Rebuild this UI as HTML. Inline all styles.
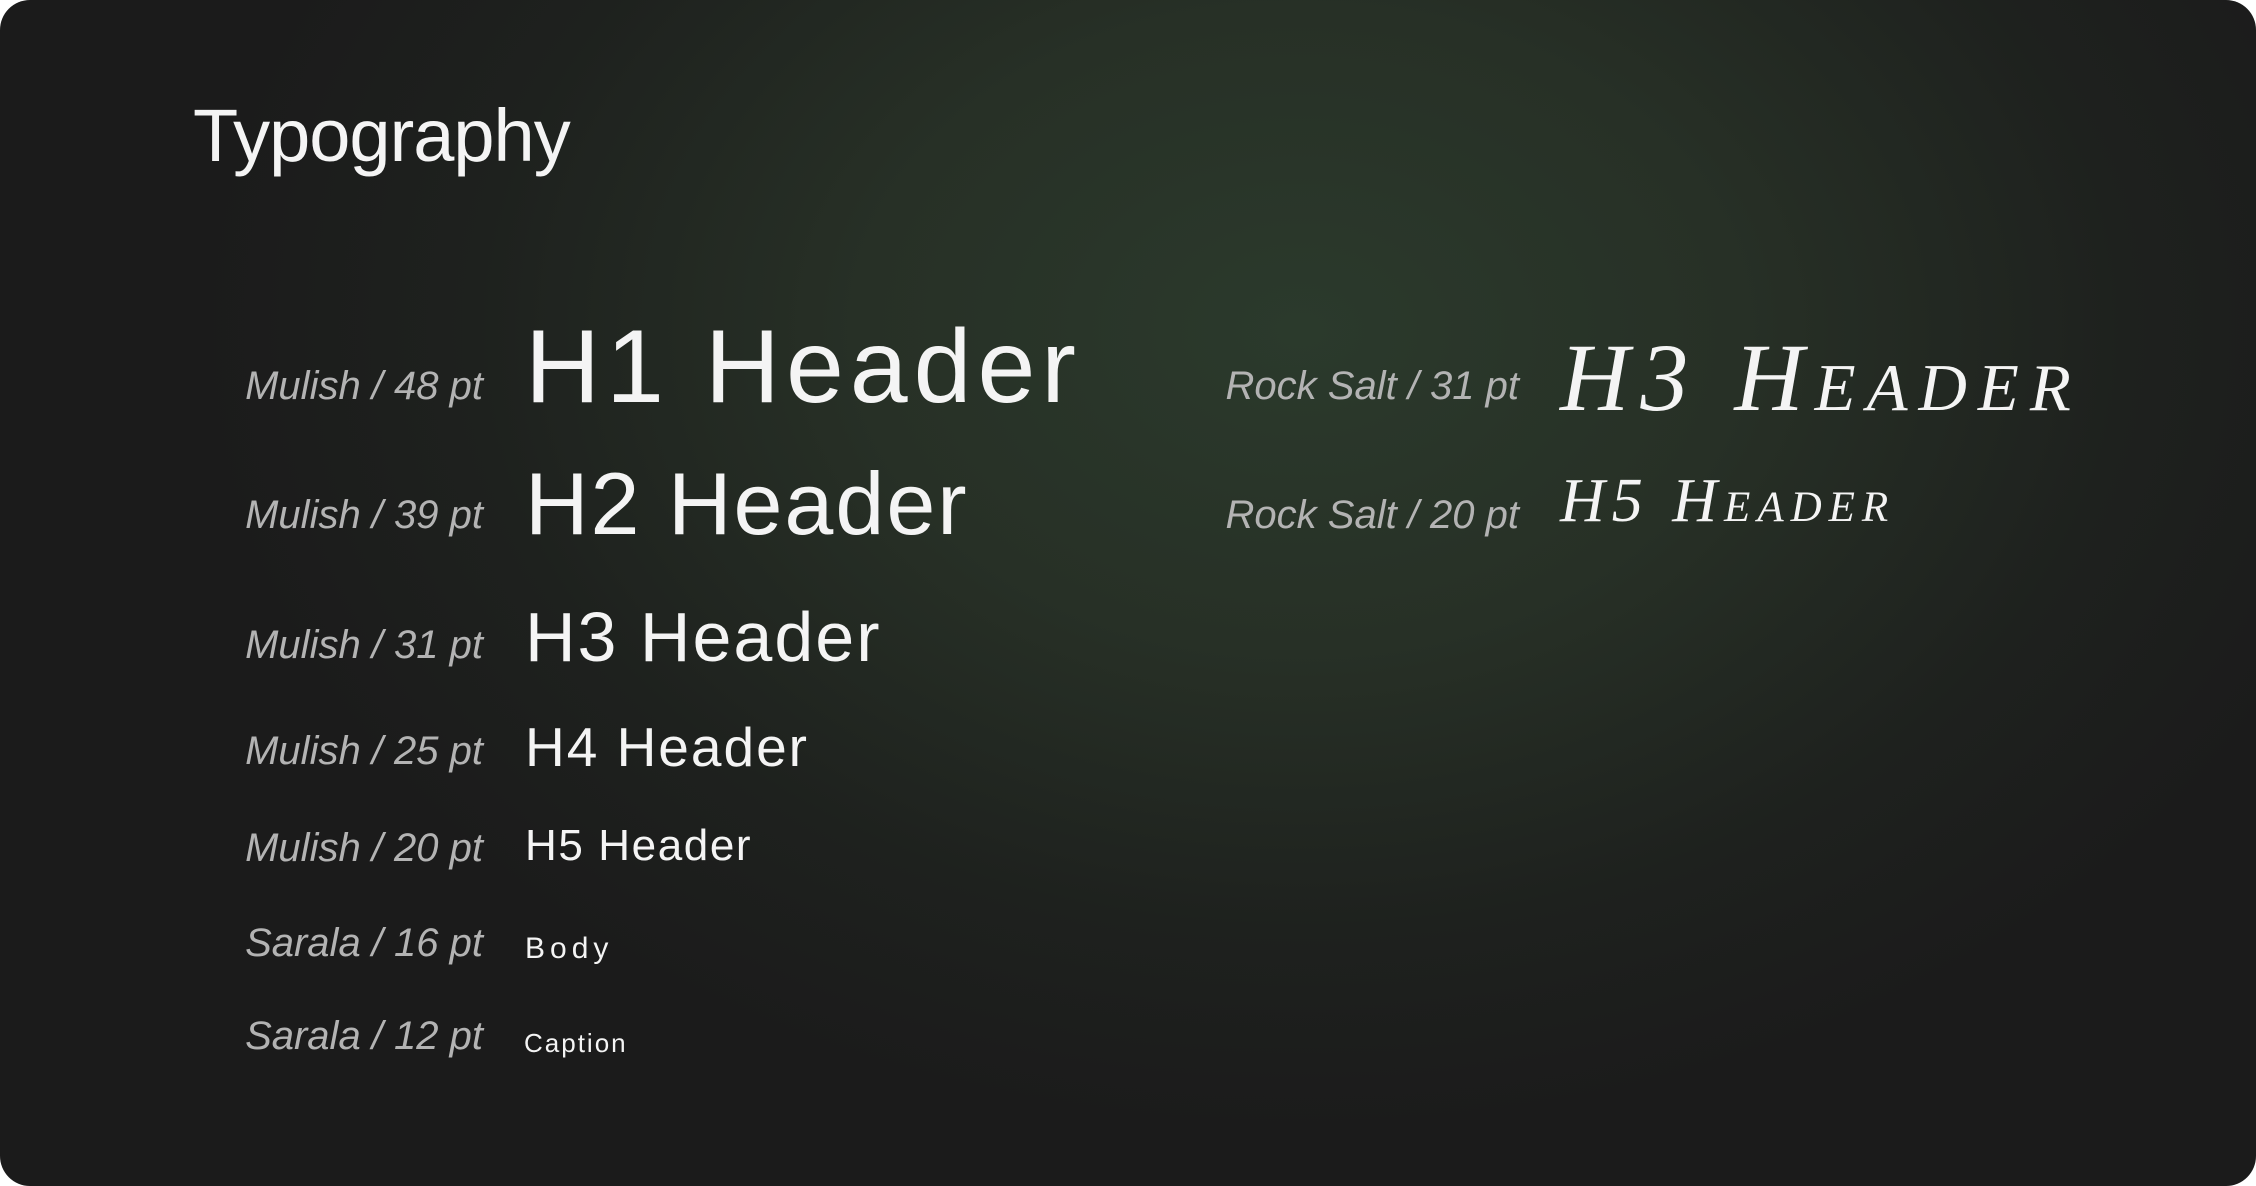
<!DOCTYPE html>
<html><head><meta charset="utf-8"><style>
html,body{margin:0;padding:0;background:#fff;}
.card{position:absolute;left:0;top:0;width:2256px;height:1186px;border-radius:30px;overflow:hidden;
background:radial-gradient(ellipse 1100px 800px at 1300px 330px,#2b3a2c 0%,#273026 40%,#1e211e 75%,#1b1b1b 100%);}
.t{position:absolute;white-space:nowrap;line-height:1;font-family:"Liberation Sans",sans-serif;}
.lab{color:#b3b3b3;font-style:italic;font-size:40px;text-align:right;width:600px;letter-spacing:0;}
.w{color:#f4f4f4;}
.r{color:#f4f4f4;font-family:"Liberation Serif",serif;font-style:italic;font-variant:small-caps;}
</style></head><body><div class="card">
<div class="t w" style="left:193px;top:99px;font-size:74px;font-weight:300;letter-spacing:-1px">Typography</div>

<div class="t lab" style="left:-117px;top:366px">Mulish / 48 pt</div>
<div class="t w" style="left:525px;top:315px;font-size:104px;letter-spacing:6px">H1 Header</div>

<div class="t lab" style="left:-117px;top:495px">Mulish / 39 pt</div>
<div class="t w" style="left:525px;top:460px;font-size:88px;letter-spacing:2px">H2 Header</div>

<div class="t lab" style="left:-117px;top:625px">Mulish / 31 pt</div>
<div class="t w" style="left:525px;top:602px;font-size:70px;letter-spacing:2px">H3 Header</div>

<div class="t lab" style="left:-117px;top:731px">Mulish / 25 pt</div>
<div class="t w" style="left:525px;top:720px;font-size:55px;letter-spacing:2px">H4 Header</div>

<div class="t lab" style="left:-117px;top:828px">Mulish / 20 pt</div>
<div class="t w" style="left:525px;top:824px;font-size:44px;letter-spacing:1.6px">H5 Header</div>

<div class="t lab" style="left:-117px;top:923px">Sarala / 16 pt</div>
<div class="t w" style="left:525px;top:934px;font-size:30px;letter-spacing:5px">Body</div>

<div class="t lab" style="left:-117px;top:1016px">Sarala / 12 pt</div>
<div class="t w" style="left:524px;top:1030px;font-size:26px;letter-spacing:2px">Caption</div>

<div class="t lab" style="left:919px;top:366px">Rock Salt / 31 pt</div>
<div class="t r" style="left:1560px;top:330px;font-size:96px;letter-spacing:11px">H3 Header</div>

<div class="t lab" style="left:919px;top:495px">Rock Salt / 20 pt</div>
<div class="t r" style="left:1560px;top:470px;font-size:62px;letter-spacing:7px">H5 Header</div>
</div></body></html>
